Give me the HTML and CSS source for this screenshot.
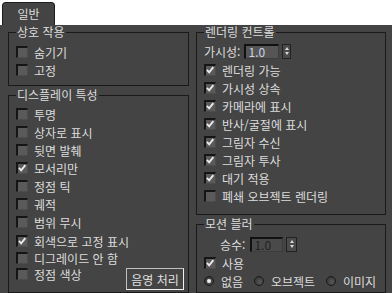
FILE: index.html
```html
<!DOCTYPE html>
<html lang="ko">
<head>
  <meta charset="UTF-8">
  <title>일반</title>
  <link rel="stylesheet" href="styles.css">
</head>
<body>

  <div class="tabs">
    <div class="tab">일반</div>
  </div>

  <div class="panel">
    <div class="col">
      <fieldset class="group g-interact">
        <legend>상호 작용</legend>
        <label class="row"><span class="cb"></span>숨기기</label>
        <label class="row"><span class="cb"></span>고정</label>
      </fieldset>

      <fieldset class="group g-display">
        <legend>디스플레이 특성</legend>
        <label class="row"><span class="cb"></span>투명</label>
        <label class="row"><span class="cb"></span>상자로 표시</label>
        <label class="row"><span class="cb"></span>뒷면 발췌</label>
        <label class="row"><span class="cb on"><svg viewBox="0 0 12 12"><path d="M2.3 5.8 L5 8.8 L10 2.6"/></svg></span>모서리만</label>
        <label class="row"><span class="cb"></span>정점 틱</label>
        <label class="row"><span class="cb"></span>궤적</label>
        <label class="row"><span class="cb"></span>범위 무시</label>
        <label class="row gap1"><span class="cb on"><svg viewBox="0 0 12 12"><path d="M2.3 5.8 L5 8.8 L10 2.6"/></svg></span>회색으로 고정 표시</label>
        <label class="row short"><span class="cb"></span>디그레이드 안 함</label>
        <div class="row short last">
          <label class="row-label"><span class="cb"></span>정점 색상</label>
          <button class="btn">음영 처리</button>
        </div>
      </fieldset>
    </div>

    <div class="col">
      <fieldset class="group g-render">
        <legend>렌더링 컨트롤</legend>
        <div class="row field-row">
          <span class="field-label">가시성:</span>
          <span class="num">1.0</span>
          <span class="spin"><i class="up"></i><i class="down"></i></span>
        </div>
        <label class="row"><span class="cb on"><svg viewBox="0 0 12 12"><path d="M2.3 5.8 L5 8.8 L10 2.6"/></svg></span>렌더링 가능</label>
        <label class="row"><span class="cb on"><svg viewBox="0 0 12 12"><path d="M2.3 5.8 L5 8.8 L10 2.6"/></svg></span>가시성 상속</label>
        <label class="row"><span class="cb on"><svg viewBox="0 0 12 12"><path d="M2.3 5.8 L5 8.8 L10 2.6"/></svg></span>카메라에 표시</label>
        <label class="row"><span class="cb on"><svg viewBox="0 0 12 12"><path d="M2.3 5.8 L5 8.8 L10 2.6"/></svg></span>반사/굴절에 표시</label>
        <label class="row"><span class="cb on"><svg viewBox="0 0 12 12"><path d="M2.3 5.8 L5 8.8 L10 2.6"/></svg></span>그림자 수신</label>
        <label class="row"><span class="cb on"><svg viewBox="0 0 12 12"><path d="M2.3 5.8 L5 8.8 L10 2.6"/></svg></span>그림자 투사</label>
        <label class="row"><span class="cb on"><svg viewBox="0 0 12 12"><path d="M2.3 5.8 L5 8.8 L10 2.6"/></svg></span>대기 적용</label>
        <label class="row"><span class="cb"></span>폐쇄 오브젝트 렌더링</label>
      </fieldset>

      <fieldset class="group g-motion">
        <legend>모션 블러</legend>
        <div class="row field-row indent">
          <span class="field-label">승수:</span>
          <span class="num disabled">1.0</span>
          <span class="spin"><i class="up"></i><i class="down"></i></span>
        </div>
        <label class="row"><span class="cb on"><svg viewBox="0 0 12 12"><path d="M2.3 5.8 L5 8.8 L10 2.6"/></svg></span>사용</label>
        <div class="row radios">
          <label class="opt opt-none"><span class="radio on"></span>없음</label>
          <label class="opt opt-obj"><span class="radio"></span>오브젝트</label>
          <label class="opt"><span class="radio"></span>이미지</label>
        </div>
      </fieldset>
    </div>
  </div>

</body>
</html>
```

FILE: styles.css
```css
body {
  margin: 0;
  background-color: #ffffff;
  font-family: "Noto Sans CJK KR", "DejaVu Sans", sans-serif;
  font-size: 12px;
  color: #dcdcdc;
  overflow: hidden;
  height: 293px;
}

.tabs {
  height: 25px;
  padding: 2px 0 0 2px;
  box-sizing: border-box;
}

.tab {
  width: 53px;
  height: 23px;
  box-sizing: border-box;
  background-color: #444444;
  border: 1px solid #1e1e1e;
  border-bottom: none;
  border-radius: 4px 4px 0 0;
  text-align: center;
  line-height: 22px;
}

.panel {
  background-color: #444444;
  height: 268px;
  display: flex;
  padding-left: 8px;
  gap: 7px;
}

.col {
  display: flex;
  flex-direction: column;
}

.group {
  margin: 0;
  border: 1px solid #1a1a1a;
  padding: 0 6px 0 7px;
  min-width: 0;
  box-sizing: border-box;
}

.group legend {
  padding: 0 1px;
  line-height: 14px;
}

.group + .group {
  margin-top: 2px;
}

.g-interact {
  width: 181px;
  padding-top: 4px;
  padding-bottom: 6px;
}

.g-display {
  width: 181px;
  height: 215px;
  padding-top: 3px;
}

.g-render {
  width: 190px;
  padding-top: 2px;
  padding-bottom: 9px;
}

.g-motion {
  width: 190px;
  height: 84px;
  padding-top: 2px;
}

.row {
  display: flex;
  align-items: center;
  gap: 6px;
  height: 18px;
  white-space: nowrap;
}

.row.gap1 {
  margin-top: 1px;
}

.row.short {
  height: 16px;
}

.row.last {
  justify-content: space-between;
  align-items: flex-start;
}

.row-label {
  display: flex;
  align-items: center;
  gap: 6px;
  height: 16px;
}

.cb {
  width: 12px;
  height: 12px;
  box-sizing: border-box;
  background-color: #5a5a5a;
  border-top: 2px solid #151515;
  border-left: 2px solid #151515;
  border-right: 1px solid #4c4c4c;
  border-bottom: 1px solid #4c4c4c;
  flex-shrink: 0;
}

.cb svg {
  display: block;
  width: 10px;
  height: 10px;
  margin: -1px 0 0 -1px;
}

.cb svg path {
  fill: none;
  stroke: #ececec;
  stroke-width: 2.2;
}

.btn {
  margin: 2px -2px 0 0;
  width: 58px;
  height: 22px;
  padding: 0;
  background-color: #444444;
  border: 1px solid #c0c0c0;
  border-right-color: #f0f0f0;
  border-bottom-color: #f0f0f0;
  color: #e0e0e0;
  font-family: inherit;
  font-size: 12px;
}

.field-row {
  height: 20px;
  gap: 0;
}

.field-row .field-label {
  margin-right: 4px;
}

.field-row.indent {
  padding-left: 16px;
  margin-top: 1px;
}

.field-row.indent .field-label {
  margin-right: 5px;
}

.num {
  width: 35px;
  height: 15px;
  box-sizing: border-box;
  background-color: #555555;
  border-top: 2px solid #111111;
  border-left: 2px solid #111111;
  border-right: 1px solid #3c3c3c;
  border-bottom: 1px solid #3c3c3c;
  color: #c9d3e6;
  line-height: 12px;
  padding-left: 2px;
}

.num.disabled {
  width: 33px;
  background-color: #4a4a4a;
  color: #222222;
}

.spin {
  margin-left: 3px;
  width: 9px;
  height: 15px;
  box-sizing: border-box;
  border: 1px solid #222222;
  background-color: #4a4a4a;
  display: flex;
  flex-direction: column;
  align-items: center;
  justify-content: center;
  gap: 2px;
}

.indent .spin {
  width: 11px;
}

.spin i {
  width: 0;
  height: 0;
  border-left: 2px solid transparent;
  border-right: 2px solid transparent;
}

.spin .up {
  border-bottom: 3px solid #d8d8d8;
}

.spin .down {
  border-top: 3px solid #d8d8d8;
}

.radios {
  gap: 0;
}

.opt {
  display: flex;
  align-items: center;
  gap: 7px;
}

.opt-none {
  width: 50px;
}

.opt-obj {
  width: 72px;
}

.radio {
  width: 10px;
  height: 10px;
  box-sizing: border-box;
  border-radius: 50%;
  background: radial-gradient(circle at 60% 60%, #5a5a5a, #2a2a2a);
  border: 1px solid #1a1a1a;
  position: relative;
}

.radio.on::after {
  content: "";
  position: absolute;
  left: 2px;
  top: 2px;
  width: 4px;
  height: 4px;
  border-radius: 50%;
  background-color: #f0f0f0;
}
```
